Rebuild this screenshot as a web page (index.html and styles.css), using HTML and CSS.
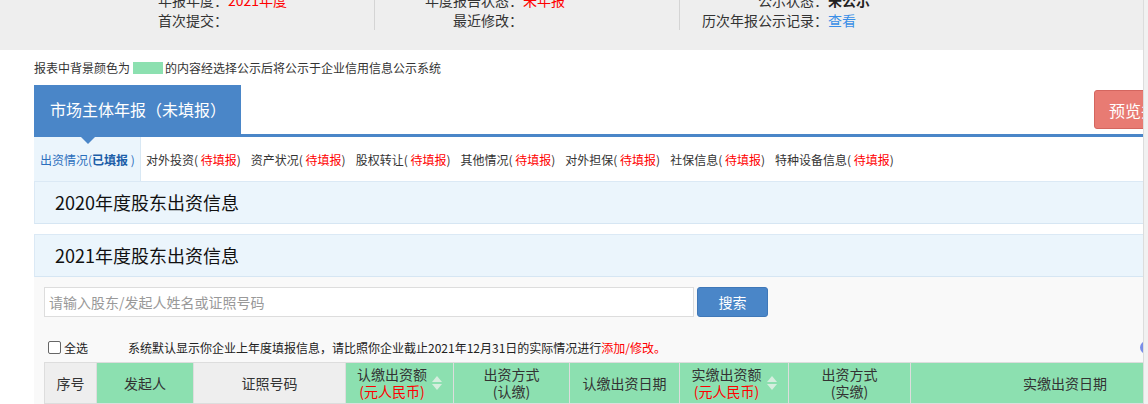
FILE: index.html
```html
<!DOCTYPE html>
<html lang="zh-CN">
<head>
    <meta charset="UTF-8">
    <meta name="viewport" content="width=device-width, initial-scale=1.0">
    <title>市场主体年报</title>
    <link rel="stylesheet" href="styles.css">
</head>
<body>
    <div class="page">
        <div class="main">
            <!-- 年报基本信息 -->
            <div class="head">
                <div class="head-cols">
                    <div class="head-col first">
                        <div class="head-row"><span class="label">年报年度：</span><span class="red">2021年度</span></div>
                        <div class="head-row"><span class="label">首次提交：</span></div>
                    </div>
                    <div class="head-col">
                        <div class="head-row"><span class="label">年度报告状态：</span><span class="red">未年报</span></div>
                        <div class="head-row"><span class="label">最近修改：</span></div>
                    </div>
                    <div class="head-col">
                        <div class="head-row"><span class="label">公示状态：</span><b>未公示</b></div>
                        <div class="head-row"><span class="label">历次年报公示记录：</span><a class="link" href="#">查看</a></div>
                    </div>
                </div>
            </div>

            <div class="content">
                <p class="notice">报表中背景颜色为<span class="swatch"></span>的内容经选择公示后将公示于企业信用信息公示系统</p>

                <!-- 年报标签 -->
                <div class="tabbar">
                    <div class="main-tab">市场主体年报（未填报）</div>
                    <button class="preview-btn">预览并提交</button>
                </div>

                <!-- 子栏目 -->
                <div class="subtabs">
                    <div class="subtab active"><span>出资情况(<b>已填报</b> )</span></div>
                    <div class="subtab"><span>对外投资( <span class="red">待填报</span>)</span></div>
                    <div class="subtab"><span>资产状况( <span class="red">待填报</span>)</span></div>
                    <div class="subtab"><span>股权转让( <span class="red">待填报</span>)</span></div>
                    <div class="subtab"><span>其他情况( <span class="red">待填报</span>)</span></div>
                    <div class="subtab"><span>对外担保( <span class="red">待填报</span>)</span></div>
                    <div class="subtab"><span>社保信息( <span class="red">待填报</span>)</span></div>
                    <div class="subtab"><span>特种设备信息( <span class="red">待填报</span>)</span></div>
                </div>

                <div class="sec-title">2020年度股东出资信息</div>
                <div class="sec-title second">2021年度股东出资信息</div>

                <div class="sec-body">
                    <div class="search">
                        <input type="text" class="search-input" placeholder="请输入股东/发起人姓名或证照号码">
                        <button class="search-btn">搜索</button>
                    </div>

                    <div class="check-row">
                        <span class="checkbox"></span>
                        <span class="check-label">全选</span>
                        <span class="hint">系统默认显示你企业上年度填报信息，请比照你企业截止2021年12月31日的实际情况进行<span class="red">添加/修改。</span></span>
                        <span class="help-icon">?</span>
                    </div>

                    <table class="grid">
                        <colgroup>
                            <col class="w-no">
                            <col class="w-name">
                            <col class="w-id">
                            <col class="w-amt">
                            <col class="w-way">
                            <col class="w-date">
                            <col class="w-amt2">
                            <col class="w-way2">
                            <col>
                        </colgroup>
                        <thead>
                            <tr>
                                <th>序号</th>
                                <th class="pub">发起人</th>
                                <th>证照号码</th>
                                <th class="pub">
                                    <div class="th-sort">
                                        <div>认缴出资额<br><span class="red">(元人民币)</span></div>
                                        <span class="sort"><i class="up"></i><i class="down"></i></span>
                                    </div>
                                </th>
                                <th class="pub">出资方式<br>(认缴)</th>
                                <th class="pub">认缴出资日期</th>
                                <th class="pub">
                                    <div class="th-sort">
                                        <div>实缴出资额<br><span class="red">(元人民币)</span></div>
                                        <span class="sort"><i class="up"></i><i class="down"></i></span>
                                    </div>
                                </th>
                                <th class="pub">出资方式<br>(实缴)</th>
                                <th class="pub">实缴出资日期</th>
                            </tr>
                        </thead>
                    </table>
                </div>
            </div>
        </div>
        <div class="scrollbar"></div>
    </div>
</body>
</html>
```

FILE: styles.css
```css
body {
    margin: 0;
    font-family: "Noto Sans CJK SC", "Microsoft YaHei", sans-serif;
    color: #333;
    background: #fff;
}
.page {
    display: flex;
    height: 404px;
    overflow: hidden;
}
.main {
    flex: 1;
    min-width: 0;
    overflow: hidden;
}
.scrollbar {
    width: 4px;
    background: #f1f1f1;
    border-left: 1px solid #dcdcdc;
}
.red {
    color: #ff0000;
}

/* top info */
.head {
    height: 50px;
    background: #eeeeee;
    overflow: hidden;
}
.head-cols {
    display: flex;
    margin-top: -10px;
    padding-left: 80px;
}
.head-col {
    width: 304px;
    border-left: 1px solid #d4d4d4;
}
.head-col.first {
    width: 294px;
    border-left: none;
}
.head-row {
    display: flex;
    height: 20px;
    line-height: 20px;
    font-size: 14px;
}
.head-col .label {
    width: 148px;
    text-align: right;
}
.head-col b {
    color: #222;
}
.head-col .link {
    color: #3a8ee6;
    text-decoration: none;
}

.content {
    padding-left: 34px;
}
.notice {
    margin: 0;
    height: 35px;
    font-size: 12px;
    line-height: 12px;
    display: flex;
    align-items: center;
    white-space: nowrap;
}
.swatch {
    display: inline-block;
    width: 30px;
    height: 12px;
    background: #8ce0b0;
    margin: 0 2px 0 3px;
}

/* main tab */
.tabbar {
    display: flex;
    height: 49px;
    border-bottom: 3px solid #4a86c8;
}
.main-tab {
    width: 207px;
    flex-shrink: 0;
    background: #4a86c8;
    color: #fff;
    font-size: 16px;
    line-height: 49px;
    padding-left: 16px;
    box-sizing: border-box;
    white-space: nowrap;
}
.preview-btn {
    flex-shrink: 0;
    margin: 5px 0 0 853px;
    height: 39px;
    padding: 0 14px;
    background: #e87b73;
    border: 1px solid #d4665f;
    border-radius: 3px;
    color: #fff;
    font-family: inherit;
    font-size: 16px;
    white-space: nowrap;
}

/* sub tabs */
.subtabs {
    display: flex;
    height: 44px;
    align-items: stretch;
    font-size: 12px;
    white-space: pre;
}
.subtab {
    display: flex;
    align-items: center;
    padding: 0 5px;
}
.subtab.active {
    position: relative;
    width: 107px;
    box-sizing: border-box;
    padding: 0 6px;
    background: #ebf5fc;
    border-right: 1px solid #d8e8f4;
    color: #2b6fbd;
}
.subtab.active b {
    color: #1c5ea8;
}
.subtab.active::before {
    content: "";
    position: absolute;
    top: 0;
    left: 47px;
    border-left: 7px solid transparent;
    border-right: 7px solid transparent;
    border-top: 7px solid #4a86c8;
}

/* section titles */
.sec-title {
    height: 41px;
    line-height: 41px;
    background: #ebf5fc;
    border-top: 1px solid #dbe9f5;
    border-bottom: 1px solid #d6e6f3;
    border-left: 1px solid #dbe9f5;
    padding-left: 20px;
    font-size: 18px;
    color: #111;
}
.sec-title.second {
    margin-top: 10px;
}

.sec-body {
    background: #f9f9f9;
    padding: 10px 0 0 10px;
    height: 200px;
}
.search {
    display: flex;
}
.search-input {
    width: 650px;
    height: 30px;
    box-sizing: border-box;
    border: 1px solid #dddddd;
    padding: 0 4px;
    font-family: inherit;
    font-size: 14px;
    outline: none;
}
.search-input::placeholder {
    color: #999;
}
.search-btn {
    width: 71px;
    height: 30px;
    margin-left: 3px;
    background: #4a86c8;
    border: 1px solid #3f78b8;
    border-radius: 3px;
    color: #fff;
    font-family: inherit;
    font-size: 14px;
}

.check-row {
    display: flex;
    align-items: center;
    height: 20px;
    margin-top: 20px;
    font-size: 12px;
    white-space: nowrap;
}
.checkbox {
    width: 11px;
    height: 11px;
    border: 1px solid #666;
    border-radius: 2px;
    background: #fff;
    margin-left: 4px;
}
.check-label {
    margin-left: 3px;
    color: #222;
}
.hint {
    margin-left: 40px;
    color: #222;
}
.help-icon {
    margin-left: auto;
    margin-right: -10px;
    width: 13px;
    height: 13px;
    border-radius: 50%;
    background: #7a8ee8;
    color: #fff;
    font-size: 10px;
    line-height: 13px;
    text-align: center;
}

/* table */
.grid {
    margin-top: 5px;
    width: 1176px;
    border-collapse: collapse;
    table-layout: fixed;
}
.w-no { width: 52px; }
.w-name { width: 97px; }
.w-id { width: 152px; }
.w-amt { width: 108px; }
.w-way { width: 116px; }
.w-date { width: 110px; }
.w-amt2 { width: 109px; }
.w-way2 { width: 122px; }
.grid th {
    height: 40px;
    padding: 0;
    border: 1px solid #dddddd;
    background: #eeeeee;
    font-size: 14px;
    font-weight: normal;
    line-height: 17px;
    color: #333;
    text-align: center;
}
.grid th.pub {
    background: #8ce0b0;
}
.th-sort {
    display: flex;
    align-items: center;
    justify-content: center;
}
.sort {
    display: flex;
    flex-direction: column;
    margin-left: 5px;
}
.sort i {
    width: 0;
    height: 0;
    border-left: 5px solid transparent;
    border-right: 5px solid transparent;
}
.sort .up {
    border-bottom: 6px solid #d6eedf;
    margin-bottom: 2px;
}
.sort .down {
    border-top: 6px solid #d6eedf;
}
```
